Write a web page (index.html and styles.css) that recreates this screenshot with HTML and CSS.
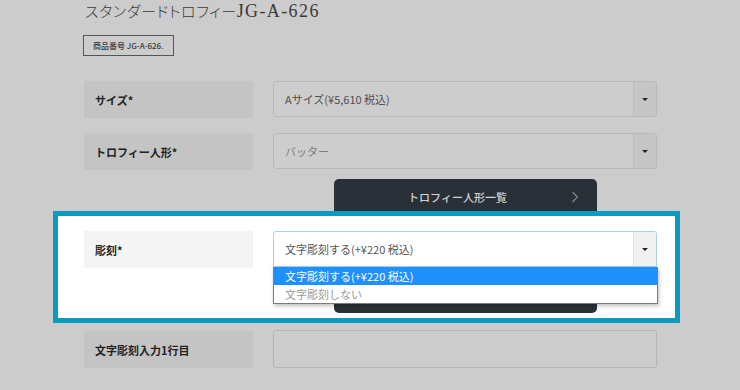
FILE: index.html
```html
<!DOCTYPE html>
<html lang="ja">
<head>
    <meta charset="UTF-8">
    <title>スタンダードトロフィーJG-A-626</title>
    <link rel="stylesheet" href="styles.css">
</head>
<body>
    <div class="page">
        <h1 class="title"><span class="title-ja">スタンダードトロフィー</span><span class="title-en">JG-A-626</span></h1>
        <p class="code">商品番号 JG-A-626.</p>

        <div class="row">
            <div class="label">サイズ*</div>
            <div class="select">
                <span class="value">Aサイズ(¥5,610 税込)</span>
                <span class="arrow"></span>
            </div>
        </div>

        <div class="row">
            <div class="label">トロフィー人形*</div>
            <div class="select">
                <span class="value muted">バッター</span>
                <span class="arrow"></span>
            </div>
        </div>

        <div class="more-wrap">
            <div class="more">
                <span>トロフィー人形一覧</span>
                <svg class="chev" width="8" height="12" viewBox="0 0 8 12"><path d="M1.5 1 L6.5 6 L1.5 11" fill="none" stroke="currentColor" stroke-width="1.1"/></svg>
            </div>
        </div>

        <!-- 強調表示の枠 -->
        <div class="focus">
            <div class="focus-row">
                <div class="row">
                    <div class="label">彫刻*</div>
                    <div class="select open">
                        <span class="value">文字彫刻する(+¥220 税込)</span>
                        <span class="arrow"></span>
                        <ul class="options">
                            <li class="selected">文字彫刻する(+¥220 税込)</li>
                            <li>文字彫刻しない</li>
                        </ul>
                    </div>
                </div>
            </div>
        </div>

        <div class="row last">
            <div class="label">文字彫刻入力1行目</div>
            <div class="input"></div>
        </div>
    </div>
</body>
</html>
```

FILE: styles.css
```css
body {
    margin: 0;
    background: #cccccc;
    font-family: "Noto Sans CJK JP", sans-serif;
    color: #2a2a2a;
    overflow: hidden;
}

.page {
    width: 573px;
    padding-left: 84px;
}

.title {
    margin: -5px 0 0 1px;
    font-family: "Liberation Serif", "Noto Sans CJK JP", serif;
    font-weight: normal;
    line-height: 22px;
    color: #3a3a3a;
    white-space: nowrap;
}

.title-ja {
    font-size: 15px;
    font-weight: 300;
    font-feature-settings: "palt";
    letter-spacing: 0.6px;
}

.title-en {
    font-size: 18px;
    letter-spacing: 1.4px;
}

.code {
    display: inline-block;
    margin: 12px 0 0 -1px;
    padding: 0 9px;
    height: 19px;
    line-height: 19px;
    border: 1px solid #555;
    font-size: 8px;
    font-weight: 500;
    color: #3a3a3a;
}

.row {
    display: flex;
    gap: 20px;
    margin-top: 15px;
}

.code + .row {
    margin-top: 25px;
}

.label {
    width: 169px;
    height: 37px;
    box-sizing: border-box;
    padding-left: 11px;
    display: flex;
    align-items: center;
    background: #c4c4c4;
    font-size: 11px;
    font-weight: bold;
    color: #222;
}

.select {
    position: relative;
    width: 384px;
    height: 36px;
    box-sizing: border-box;
    border: 1px solid #b9b9b9;
    border-radius: 3px;
    display: flex;
    align-items: center;
    background: #cdcdcd;
}

.value {
    flex: 1;
    padding-left: 11px;
    font-size: 11px;
    color: #4f4f4f;
}

.value.muted {
    color: #7d7d7d;
}

.arrow {
    width: 23px;
    height: 100%;
    box-sizing: border-box;
    border-left: 1px solid #bdbdbd;
    background: #c6c6c6;
    display: flex;
    align-items: center;
    justify-content: center;
}

.arrow::before {
    content: "";
    border-left: 3px solid transparent;
    border-right: 3px solid transparent;
    border-top: 3px solid #222;
}

.more-wrap {
    height: 32px;
    margin-top: 9px;
    padding-left: 250px;
}

.more {
    position: relative;
    z-index: 1;
    width: 263px;
    height: 134px;
    box-sizing: border-box;
    padding-right: 16px;
    border-radius: 5px;
    background: #2a3038;
    color: #d2d2d2;
    font-size: 11px;
    font-weight: 500;
    display: flex;
    align-items: flex-start;
    justify-content: center;
}

.more span {
    line-height: 36px;
}

.chev {
    position: absolute;
    right: 18px;
    top: 12px;
    color: #8a8a8a;
}

.focus {
    position: relative;
    width: 627px;
    margin-left: -31px;
    box-sizing: border-box;
    padding: 5px 5px 19px;
    background: #fff;
}

.focus::after {
    content: "";
    position: absolute;
    inset: 0;
    z-index: 3;
    border: 5px solid #0b9bc1;
    pointer-events: none;
}

.focus-row {
    position: relative;
    z-index: 2;
    height: 88px;
    box-sizing: border-box;
    padding: 15px 0 0 26px;
    background: #fff;
}

.focus-row .row {
    margin-top: 0;
}

.focus .label {
    background: #f4f4f4;
}

.select.open {
    background: #fff;
    border-color: #a8d3e2;
    border-radius: 3px 3px 0 0;
}

.select.open .value {
    color: #555;
}

.select.open .arrow {
    background: #f1f1f1;
    border-left-color: #e0e0e0;
}

.options {
    position: absolute;
    top: 35px;
    left: -1px;
    width: 385px;
    margin: 0;
    padding: 0;
    list-style: none;
    box-sizing: border-box;
    border: 1px solid #7b7b7b;
    border-top: 0;
    background: #fff;
    box-shadow: 1px 2px 4px rgba(0, 0, 0, 0.25);
}

.options li {
    height: 18px;
    line-height: 18px;
    padding-left: 11px;
    font-size: 11px;
    color: #9a9a9a;
}

.options li.selected {
    background: #1e90ff;
    color: #fff;
}

.row.last {
    margin-top: 8px;
}

.input {
    width: 384px;
    height: 38px;
    margin-top: -1px;
    box-sizing: border-box;
    border: 1px solid #b5b5b5;
    border-radius: 3px;
    background: #cdcdcd;
}
```
